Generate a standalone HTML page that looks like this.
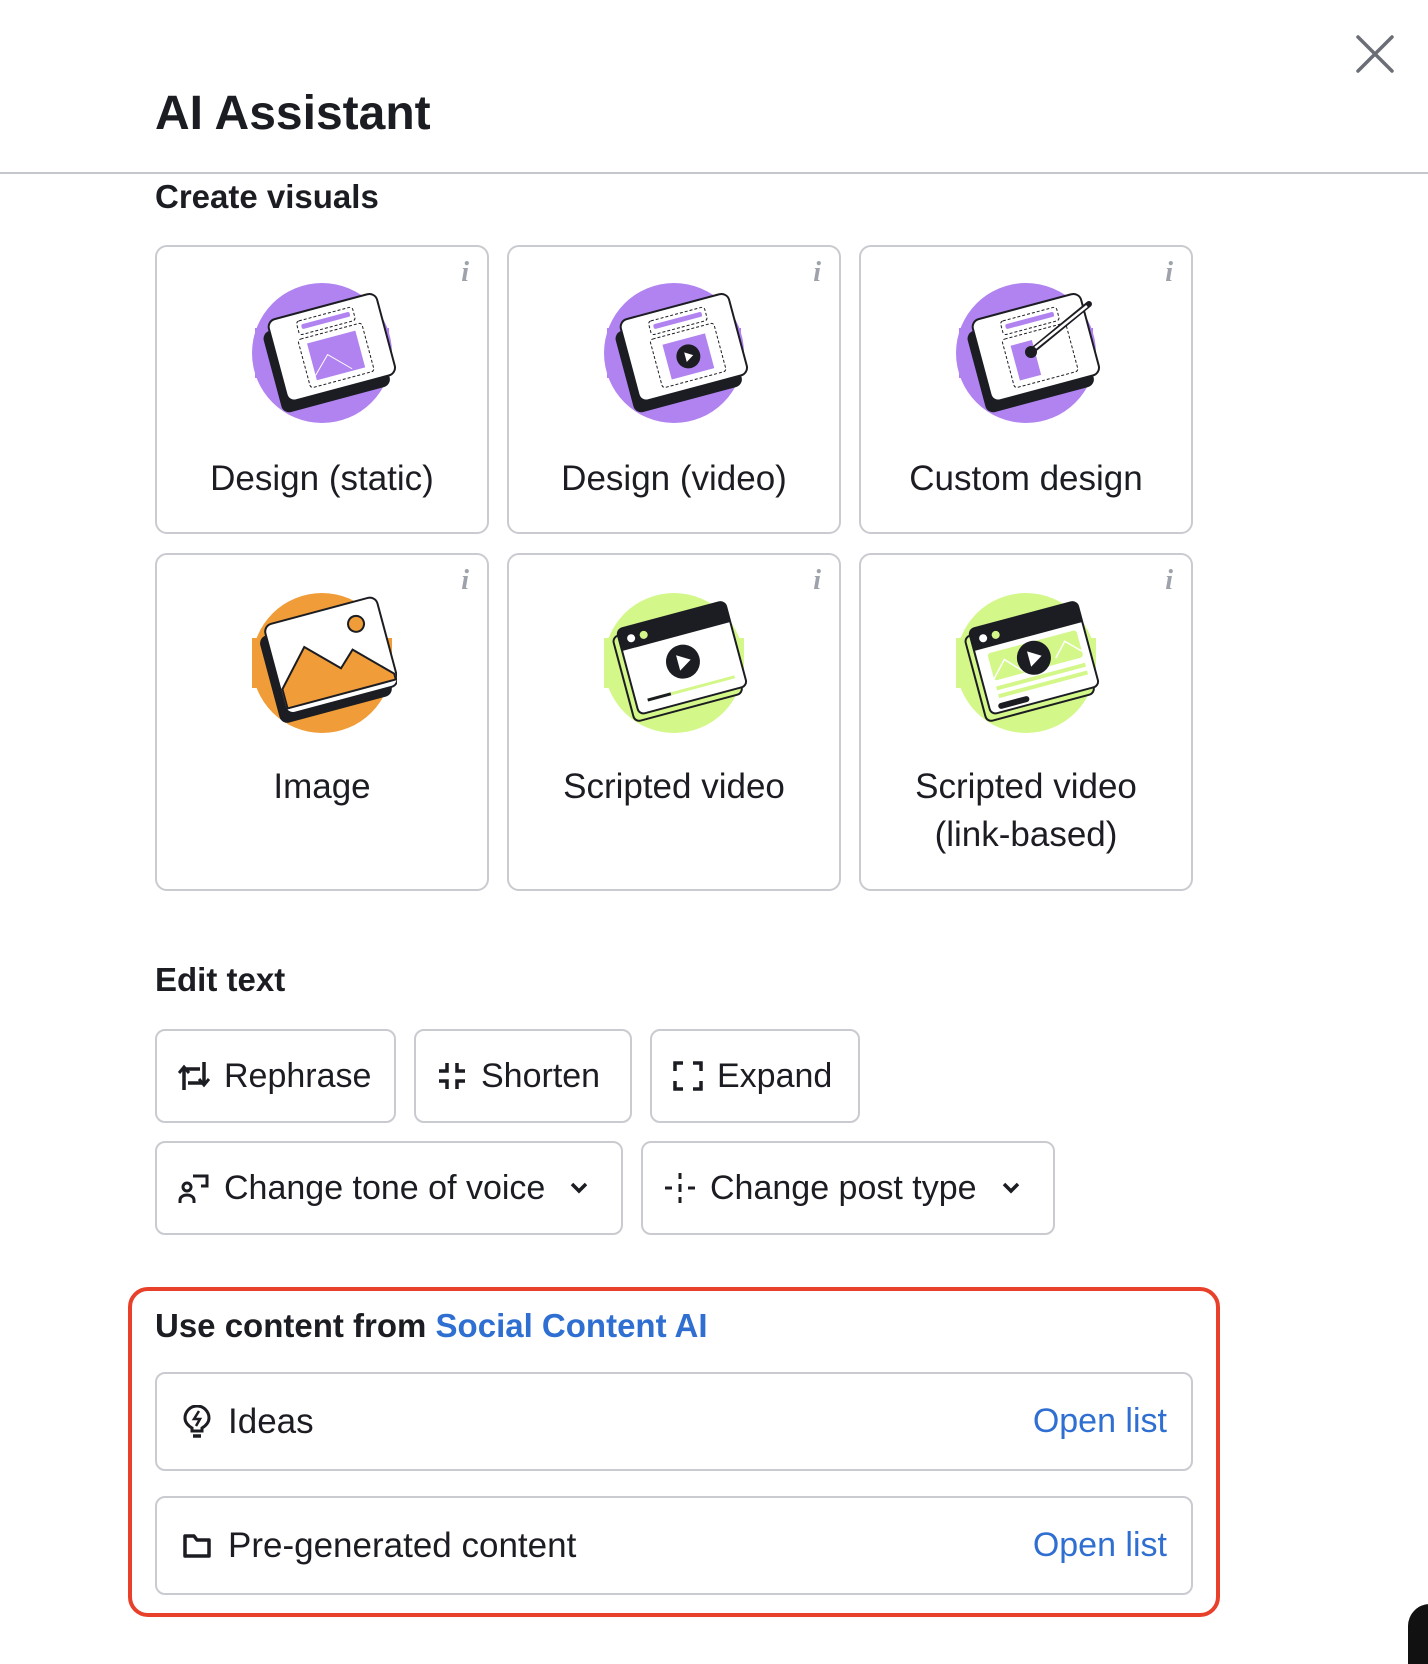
<!DOCTYPE html>
<html><head><meta charset="utf-8"><style>
*{box-sizing:border-box;margin:0;padding:0}
body{width:1428px;height:1644px;background:#fff;font-family:"Liberation Sans",sans-serif;color:#1b1d22;position:relative;overflow:hidden}
.abs{position:absolute}
.h{font-weight:bold;font-size:33px;line-height:33px;color:#1b1d22}
.card{position:absolute;border:2px solid #c9cbd0;border-radius:12px;width:334px}
.card .lbl{position:absolute;left:0;right:0;text-align:center;font-size:35px;line-height:48px}
.card .i{position:absolute;right:18px;top:10px;font-family:"Liberation Serif",serif;font-style:italic;font-weight:bold;font-size:28px;color:#9ea3ab}
.card svg{position:absolute;left:90px;width:150px;height:150px}
.btn{position:absolute;height:94px;border:2px solid #c9cbd0;border-radius:10px;display:flex;align-items:center;padding-left:21px;font-size:34px;line-height:34px}
.btn svg{margin-right:14px;flex:none}
.row{position:absolute;left:155px;width:1038px;height:99px;border:2px solid #c9cbd0;border-radius:10px;display:flex;align-items:center;padding:0 24px 0 26px;font-size:35px}
.row .ol{margin-left:auto;color:#2f6fd1;font-size:34px}
.row svg{margin-right:17px}
</style></head><body>

<svg class="abs" style="left:1355px;top:34px" width="40" height="40" viewBox="0 0 40 40"><path d="M3 3L37 37M37 3L3 37" stroke="#6b6e76" stroke-width="3.5" stroke-linecap="round"/></svg>
<div class="abs" style="left:155px;top:90px;font-size:48px;line-height:48px;font-weight:bold">AI Assistant</div>
<div class="abs" style="left:0;top:172px;width:1428px;height:2px;background:#c4c7cc"></div>
<div class="abs h" style="left:155px;top:180px">Create visuals</div>

<!-- row 1 -->
<div class="card" style="left:155px;top:245px;height:289px"><span class="i">i</span>
<svg viewBox="0 0 150 150" style="top:31px"><circle cx="75" cy="75" r="70" fill="#b083f0"/><rect x="8" y="50" width="134" height="50" fill="#b083f0"/>
<g transform="rotate(-15 75 75)"><rect x="22" y="40" width="112" height="84" rx="8" fill="#1b1d22"/><rect x="30" y="30" width="112" height="84" rx="8" fill="#fff" stroke="#1b1d22" stroke-width="2"/><rect x="58" y="38" width="58" height="14" rx="3" fill="none" stroke="#1b1d22" stroke-dasharray="3 2"/><rect x="62" y="42" width="50" height="5" rx="2" fill="#b083f0"/><rect x="55" y="56" width="66" height="50" rx="3" fill="none" stroke="#1b1d22" stroke-dasharray="3 2"/><rect x="63" y="62" width="50" height="38" fill="#b083f0"/><path d="M63 95L80 78L100 98" stroke="#fff" fill="none"/></g></svg>
<div class="lbl" style="top:208px">Design (static)</div></div>

<div class="card" style="left:507px;top:245px;height:289px"><span class="i">i</span>
<svg viewBox="0 0 150 150" style="top:31px"><circle cx="75" cy="75" r="70" fill="#b083f0"/><rect x="8" y="50" width="134" height="50" fill="#b083f0"/>
<g transform="rotate(-15 75 75)"><rect x="22" y="40" width="112" height="84" rx="8" fill="#1b1d22"/><rect x="30" y="30" width="112" height="84" rx="8" fill="#fff" stroke="#1b1d22" stroke-width="2"/><rect x="58" y="38" width="58" height="14" rx="3" fill="none" stroke="#1b1d22" stroke-dasharray="3 2"/><rect x="62" y="42" width="50" height="5" rx="2" fill="#b083f0"/><rect x="55" y="56" width="66" height="50" rx="3" fill="none" stroke="#1b1d22" stroke-dasharray="3 2"/><rect x="66" y="64" width="44" height="36" fill="#b083f0"/><circle cx="88" cy="82" r="12" fill="#1b1d22"/><path d="M85 77L93 82L85 87Z" fill="#fff"/></g></svg>
<div class="lbl" style="top:208px">Design (video)</div></div>

<div class="card" style="left:859px;top:245px;height:289px"><span class="i">i</span>
<svg viewBox="0 0 150 150" style="top:31px"><circle cx="75" cy="75" r="70" fill="#b083f0"/><rect x="8" y="50" width="134" height="50" fill="#b083f0"/>
<g transform="rotate(-15 75 75)"><rect x="22" y="40" width="112" height="84" rx="8" fill="#1b1d22"/><rect x="30" y="30" width="112" height="84" rx="8" fill="#fff" stroke="#1b1d22" stroke-width="2"/><rect x="58" y="38" width="58" height="14" rx="3" fill="none" stroke="#1b1d22" stroke-dasharray="3 2"/><rect x="62" y="42" width="50" height="5" rx="2" fill="#b083f0"/><rect x="55" y="56" width="66" height="50" rx="3" fill="none" stroke="#1b1d22" stroke-dasharray="3 2"/><rect x="62" y="64" width="22" height="36" fill="#b083f0"/></g><path d="M82 72L138 26" stroke="#1b1d22" stroke-width="6" stroke-linecap="round"/><path d="M84 70L136 28" stroke="#fff" stroke-width="2.5"/><circle cx="80" cy="74" r="6" fill="#1b1d22"/></svg>
<div class="lbl" style="top:208px">Custom design</div></div>

<!-- row 2 -->
<div class="card" style="left:155px;top:553px;height:338px"><span class="i">i</span>
<svg viewBox="0 0 150 150" style="top:33px"><circle cx="75" cy="75" r="70" fill="#f09c38"/><rect x="5" y="50" width="140" height="50" fill="#f09c38"/>
<g transform="rotate(-15 75 75)"><rect x="20" y="34" width="116" height="90" rx="8" fill="#1b1d22"/><rect x="28" y="24" width="116" height="92" rx="8" fill="#fff" stroke="#1b1d22" stroke-width="2"/><path d="M30 110L30 90L62 55L92 85L108 70L142 104L142 110Z" fill="#f09c38" stroke="#1b1d22" stroke-width="2"/><circle cx="118" cy="46" r="8" fill="#f09c38" stroke="#1b1d22" stroke-width="2"/></g></svg>
<div class="lbl" style="top:208px">Image</div></div>

<div class="card" style="left:507px;top:553px;height:338px"><span class="i">i</span>
<svg viewBox="0 0 150 150" style="top:33px"><circle cx="75" cy="75" r="70" fill="#d4f78a"/><rect x="5" y="50" width="140" height="50" fill="#d4f78a"/>
<g transform="rotate(-15 75 75)"><rect x="22" y="34" width="112" height="88" rx="6" fill="#d4f78a" stroke="#1b1d22" stroke-width="2"/><rect x="28" y="28" width="112" height="88" rx="6" fill="#fff" stroke="#1b1d22" stroke-width="2"/><path d="M28 50V34a6 6 0 0 1 6-6h100a6 6 0 0 1 6 6v16Z" fill="#1b1d22"/><circle cx="40" cy="40" r="4" fill="#fff"/><circle cx="53" cy="40" r="4" fill="#d4f78a"/><circle cx="84" cy="76" r="17" fill="#1b1d22"/><path d="M79 68L92 76L79 84Z" fill="#fff"/><path d="M40 104H130" stroke="#d4f78a" stroke-width="3"/><path d="M40 104H64" stroke="#1b1d22" stroke-width="3"/></g></svg>
<div class="lbl" style="top:208px">Scripted video</div></div>

<div class="card" style="left:859px;top:553px;height:338px"><span class="i">i</span>
<svg viewBox="0 0 150 150" style="top:33px"><circle cx="75" cy="75" r="70" fill="#d4f78a"/><rect x="5" y="50" width="140" height="50" fill="#d4f78a"/>
<g transform="rotate(-15 75 75)"><rect x="22" y="34" width="112" height="88" rx="6" fill="#d4f78a" stroke="#1b1d22" stroke-width="2"/><rect x="28" y="28" width="112" height="88" rx="6" fill="#fff" stroke="#1b1d22" stroke-width="2"/><path d="M28 50V34a6 6 0 0 1 6-6h100a6 6 0 0 1 6 6v16Z" fill="#1b1d22"/><circle cx="40" cy="40" r="4" fill="#fff"/><circle cx="53" cy="40" r="4" fill="#d4f78a"/><rect x="40" y="56" width="92" height="28" rx="3" fill="#d4f78a"/><path d="M40 82L55 66L70 82M105 78L118 64L132 78" stroke="#fff" fill="none" stroke-width="1.5"/><path d="M40 92H132M40 100H132" stroke="#d4f78a" stroke-width="4"/><path d="M40 110H66" stroke="#1b1d22" stroke-width="6" stroke-linecap="round"/><circle cx="84" cy="72" r="17" fill="#1b1d22"/><path d="M79 64L92 72L79 80Z" fill="#fff"/></g></svg>
<div class="lbl" style="top:208px">Scripted video<br>(link-based)</div></div>

<div class="abs h" style="left:155px;top:963px">Edit text</div>

<div class="btn" style="left:155px;top:1029px;width:241px"><svg width="32" height="32" viewBox="0 0 32 32" fill="none" stroke="#1b1d22" stroke-width="3.5"><path d="M6 30V9h16"/><path d="M1 13l5-6 5 6" stroke-width="3"/><path d="M26 2v21H10"/><path d="M21 19l5 6 5-6" stroke-width="3"/></svg>Rephrase</div>
<div class="btn" style="left:414px;top:1029px;width:218px"><svg width="30" height="30" viewBox="0 0 30 30" fill="none" stroke="#1b1d22" stroke-width="3.5"><path d="M10 2v8H2M20 2v8h8M10 28v-8H2M20 28v-8h8"/></svg>Shorten</div>
<div class="btn" style="left:650px;top:1029px;width:210px"><svg width="30" height="30" viewBox="0 0 30 30" fill="none" stroke="#1b1d22" stroke-width="3.5"><path d="M2 10V2h8M20 2h8v8M2 20v8h8M28 20v8h-8"/></svg>Expand</div>

<div class="btn" style="left:155px;top:1141px;width:468px"><svg width="32" height="32" viewBox="0 0 32 32" fill="none" stroke="#1b1d22" stroke-width="3"><circle cx="9" cy="15" r="4"/><path d="M2 31v-3a7 5 0 0 1 14 0v3M15 4h14v10h-6"/></svg>Change tone of voice<svg style="margin-left:24px" width="20" height="14" viewBox="0 0 20 14"><path d="M3 3l7 7 7-7" fill="none" stroke="#1b1d22" stroke-width="3.5"/></svg></div>
<div class="btn" style="left:641px;top:1141px;width:414px"><svg width="32" height="32" viewBox="0 0 32 32" fill="none" stroke="#1b1d22" stroke-width="3"><path d="M16 1v6M16 12v8M16 25v6M1 16h7M24 16h7"/></svg>Change post type<svg style="margin-left:24px" width="20" height="14" viewBox="0 0 20 14"><path d="M3 3l7 7 7-7" fill="none" stroke="#1b1d22" stroke-width="3.5"/></svg></div>

<div class="abs" style="left:128px;top:1287px;width:1092px;height:330px;border:4px solid #e8402a;border-radius:20px"></div>
<div class="abs h" style="left:155px;top:1309px">Use content from <span style="color:#2f6fd1">Social Content AI</span></div>

<div class="row" style="top:1372px"><svg width="28" height="34" viewBox="0 0 28 34" fill="none" stroke="#1b1d22" stroke-width="3"><path d="M9 26v-3C4 20 2 17 2 13a12 12 0 0 1 24 0c0 4-2 7-7 10v3Z"/><path d="M10 31h8" stroke-width="3.5"/><path d="M16 6l-5 8h6l-4 7" stroke-width="2.5"/></svg>Ideas<span class="ol">Open list</span></div>
<div class="row" style="top:1496px"><svg width="28" height="26" viewBox="0 0 28 26" fill="none" stroke="#1b1d22" stroke-width="3.5"><path d="M2 3h9l3 4h12v16H2Z" stroke-linejoin="round"/></svg>Pre-generated content<span class="ol">Open list</span></div>

<div class="abs" style="left:1408px;top:1604px;width:40px;height:60px;background:#111;border-radius:22px 0 0 0"></div>
</body></html>
